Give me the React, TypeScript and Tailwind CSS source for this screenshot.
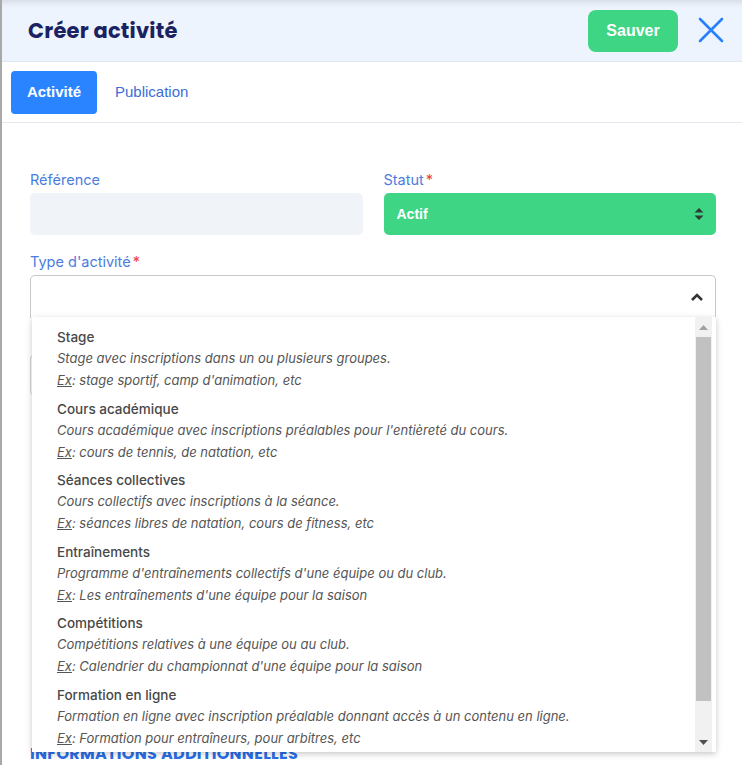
import React from 'react';

const options = [
  {
    title: 'Stage',
    description: 'Stage avec inscriptions dans un ou plusieurs groupes.',
    example: "stage sportif, camp d'animation, etc",
  },
  {
    title: 'Cours académique',
    description: "Cours académique avec inscriptions préalables pour l'entièreté du cours.",
    example: 'cours de tennis, de natation, etc',
  },
  {
    title: 'Séances collectives',
    description: 'Cours collectifs avec inscriptions à la séance.',
    example: 'séances libres de natation, cours de fitness, etc',
  },
  {
    title: 'Entraînements',
    description: "Programme d'entraînements collectifs d'une équipe ou du club.",
    example: "Les entraînements d'une équipe pour la saison",
  },
  {
    title: 'Compétitions',
    description: 'Compétitions relatives à une équipe ou au club.',
    example: "Calendrier du championnat d'une équipe pour la saison",
  },
  {
    title: 'Formation en ligne',
    description: 'Formation en ligne avec inscription préalable donnant accès à un contenu en ligne.',
    example: 'Formation pour entraîneurs, pour arbitres, etc',
  },
];

const labelFont = { fontFamily: "Inter, 'Noto Sans', sans-serif" };

const App = () => {
  return (
    <div className="min-h-[765px] w-[742px] overflow-hidden bg-white border-l-2 border-[#a9a9a9]">
      {/* header */}
      <div className="flex h-[62px] items-center justify-between border-b border-[#dfe7f2] bg-[#eef4fd] pl-[26px] pr-[18px] shadow-[inset_0_7px_7px_-5px_rgba(0,0,0,0.12)]">
        <h1
          className="text-[21px] font-bold tracking-[0.2px] text-[#1b2262]"
          style={{ fontFamily: "Poppins, Inter, 'Noto Sans', sans-serif" }}
        >
          Créer activité
        </h1>
        <div className="flex items-center gap-[20px]">
          <button
            className="h-[42px] w-[90px] rounded-[8px] bg-[#3ed584] text-[16px] font-bold text-white"
            style={{ fontFamily: "'Liberation Sans', Arial, sans-serif" }}
          >
            Sauver
          </button>
          <svg width="26" height="26" viewBox="0 0 26 26" className="mb-[2px]">
            <path d="M2 2 L24 24 M24 2 L2 24" stroke="#2a7fff" strokeWidth="2.6" strokeLinecap="round" />
          </svg>
        </div>
      </div>

      {/* tabs */}
      <div
        className="flex h-[61px] items-center gap-[18px] border-b border-[#e3e8ef] pl-[9px]"
        style={{ fontFamily: "'Liberation Sans', Arial, sans-serif" }}
      >
        <button className="h-[43px] w-[86px] rounded-[4px] bg-[#2a84ff] text-[15px] font-bold text-white">
          Activité
        </button>
        <span className="text-[15px] text-[#3a6ed8]">Publication</span>
      </div>

      {/* form */}
      <div className="relative pl-[28px] pr-[26px] pt-[46px]">
        <div className="grid grid-cols-2 gap-x-[21px]">
          <div className="flex flex-col">
            <label className="h-[22px] text-[14.5px] text-[#4a7ddd]" style={labelFont}>
              Référence
            </label>
            <div className="mt-[2px] h-[42px] rounded-[5px] bg-[#f0f3f8]" />
          </div>
          <div className="flex flex-col">
            <label className="h-[22px] text-[14.5px] text-[#4a7ddd]" style={labelFont}>
              Statut<span className="ml-[2px] text-[#f04040]">*</span>
            </label>
            <div
              className="mt-[2px] flex h-[42px] items-center justify-between rounded-[5px] bg-[#3ed584] pl-[13px] pr-[12px] text-[14px] font-bold text-white"
              style={{ fontFamily: "'Liberation Sans', Arial, sans-serif" }}
            >
              Actif
              <svg width="10" height="14" viewBox="0 0 10 14">
                <path d="M5 1 L9.5 5.5 H0.5 Z M5 13 L9.5 8.5 H0.5 Z" fill="#2f3a35" />
              </svg>
            </div>
          </div>
        </div>

        <label className="mt-[16px] block h-[22px] text-[14.5px] text-[#4a7ddd]" style={labelFont}>
          Type d'activité<span className="ml-[2px] text-[#f04040]">*</span>
        </label>
        <div className="relative mt-[2px]">
          <div className="flex h-[43px] items-center justify-end rounded-t-[5px] border border-b-0 border-[#c9c9c9] bg-white pr-[11px]">
            <svg width="14" height="10" viewBox="0 0 14 10">
              <path d="M2 8 L7 3 L12 8" stroke="#333" strokeWidth="2.6" fill="none" />
            </svg>
          </div>

          {/* dropdown */}
          <div
            className="absolute left-[2px] right-0 top-[42px] z-10 flex h-[435px] bg-white shadow-[0_2px_6px_rgba(0,0,0,0.22)]"
            style={{ fontFamily: "Inter, Roboto, 'Noto Sans', sans-serif" }}
          >
            <div className="flex flex-1 flex-col gap-[7.6px] pl-[25px] pt-[10px]">
              {options.map((opt) => (
                <div key={opt.title} className="flex flex-col">
                  <span className="h-[20px] text-[13.5px] font-medium text-[#484848]">{opt.title}</span>
                  <span className="h-[22px] text-[13px] italic leading-[22px] text-[#555]">{opt.description}</span>
                  <span className="h-[22px] text-[13px] italic leading-[22px] text-[#555]">
                    <span className="underline">Ex</span>: {opt.example}
                  </span>
                </div>
              ))}
            </div>
            <div className="mr-[4px] flex w-[17px] flex-col bg-[#f1f1f1]">
              <div className="flex h-[20px] items-center justify-center">
                <svg width="9" height="5" viewBox="0 0 9 5">
                  <path d="M4.5 0 L9 5 H0 Z" fill="#a3a3a3" />
                </svg>
              </div>
              <div className="mx-[1px] h-[364px] bg-[#c1c1c1]" />
              <div className="flex-1" />
              <div className="flex h-[20px] items-center justify-center">
                <svg width="9" height="5" viewBox="0 0 9 5">
                  <path d="M0 0 H9 L4.5 5 Z" fill="#505050" />
                </svg>
              </div>
            </div>
          </div>
        </div>

        {/* fields hidden behind the dropdown */}
        <div className="mt-[36px] h-[42px] rounded-[5px] border border-[#d5d5d5]" />
        <div className="h-[346px]" />
        <h2
          className="text-[16px] font-bold uppercase tracking-[0.3px] text-[#2a6ee8]"
          style={{ fontFamily: "Poppins, Inter, sans-serif" }}
        >
          Informations additionnelles
        </h2>
      </div>
    </div>
  );
};

export default App;
